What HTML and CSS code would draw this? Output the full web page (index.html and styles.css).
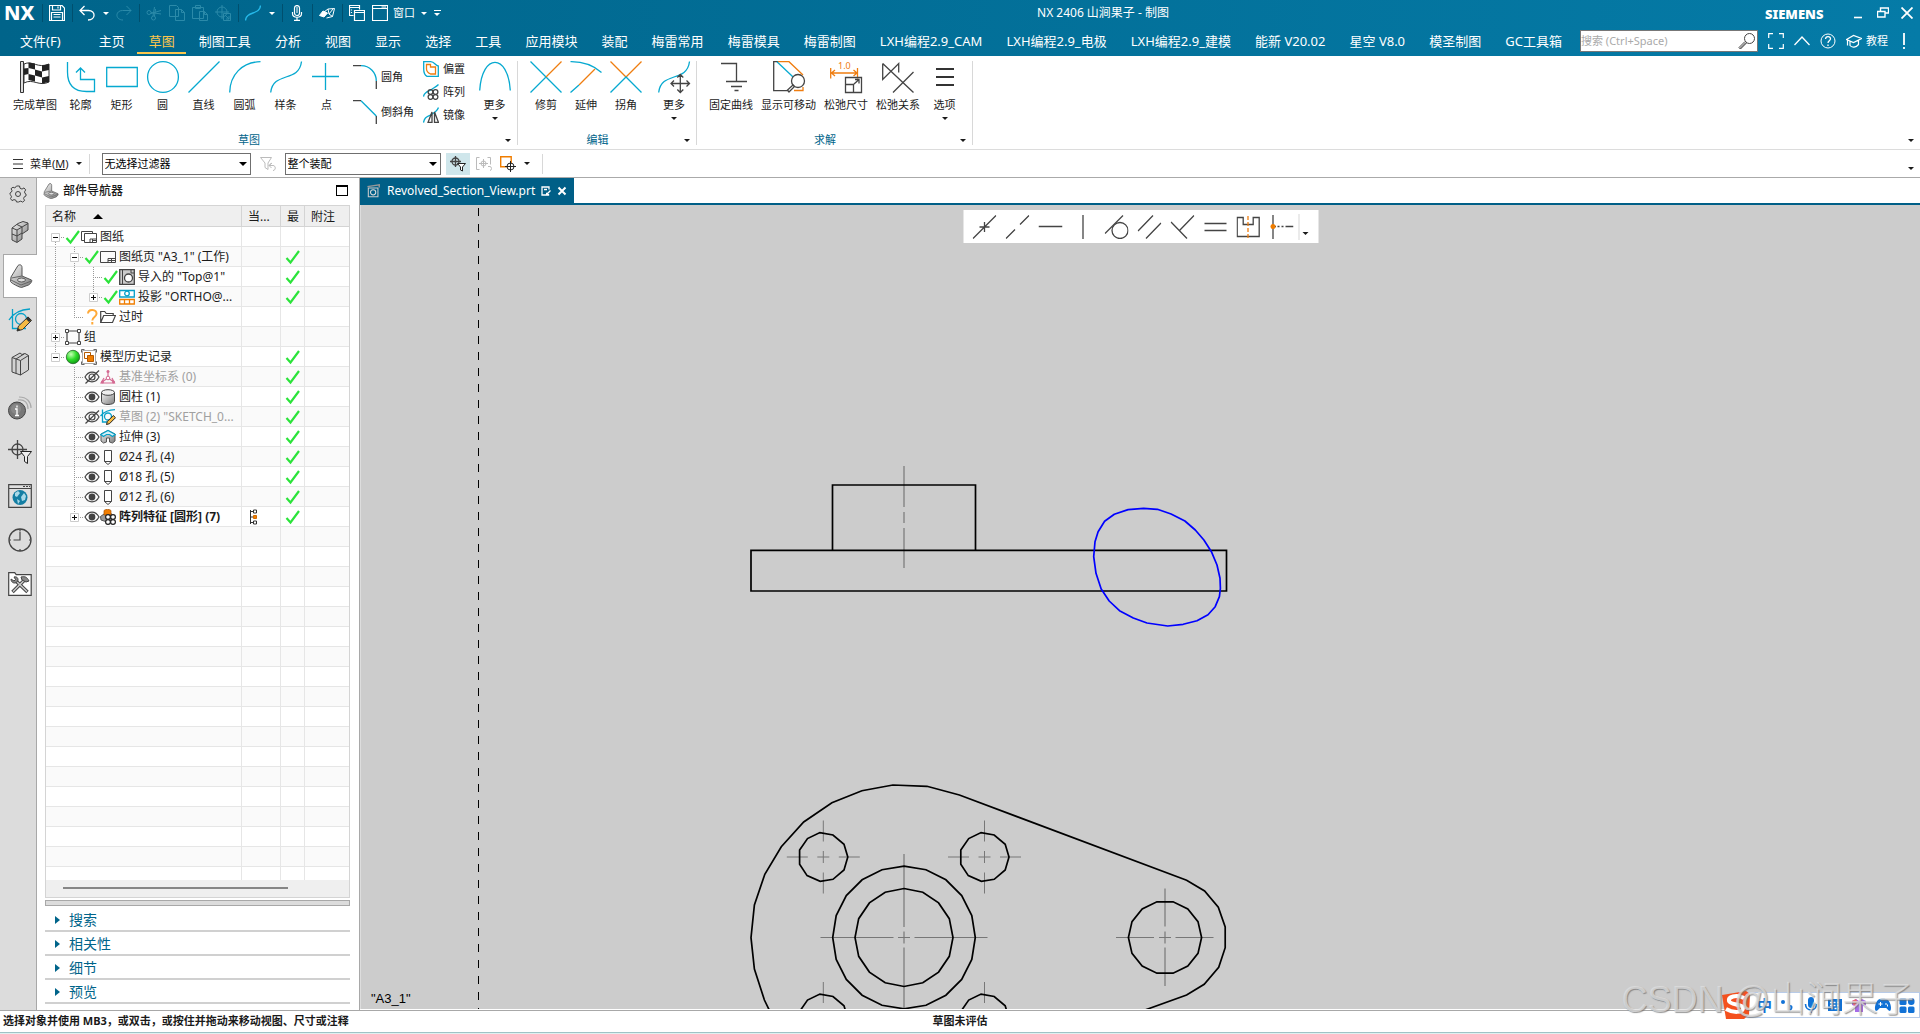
FILE: index.html
```
<!DOCTYPE html>
<html lang="zh-CN">
<head>
<meta charset="utf-8">
<title>NX 2406 山涧果子 - 制图</title>
<meta name="viewport" content="width=device-width, initial-scale=1">
<link rel="stylesheet" href="styles.css">
</head>
<body>
<svg class="defs" aria-hidden="true">
  <defs>
    <linearGradient id="steel" x1="0" y1="0" x2="1" y2="1"><stop offset="0" stop-color="#f4f4f4"/><stop offset="1" stop-color="#7d7d7d"/></linearGradient>
    <radialGradient id="ball" cx=".35" cy=".3" r=".8"><stop offset="0" stop-color="#c8ffb8"/><stop offset=".5" stop-color="#2edc2a"/><stop offset="1" stop-color="#0a8d10"/></radialGradient>
    <symbol id="check" viewBox="0 0 16 16"><path d="M1.500 9 5.500 13.500 14 2" fill="none" stroke="#2be33a" stroke-width="2.200"/></symbol>
    <symbol id="eye" viewBox="0 0 16 16"><path d="M1 8c3.500-6.500 10.500-6.500 14 0-3.500 6.500-10.500 6.500-14 0z" fill="#fff" stroke="#444" stroke-width="1.200"/><circle cx="8" cy="8" r="3.400" fill="#444"/></symbol>
    <symbol id="eye-off" viewBox="0 0 16 16"><path d="M1 8c3.500-6.500 10.500-6.500 14 0-3.500 6.500-10.500 6.500-14 0z" fill="none" stroke="#444" stroke-width="1.200"/><circle cx="8" cy="8" r="3" fill="none" stroke="#444" stroke-width="1.200"/><path d="M1.500 14.500 15 1.500" stroke="#444" stroke-width="1.200"/></symbol>
    <symbol id="hole" viewBox="0 0 16 16"><path d="M4.500 1.500h7v11l-3.500 3-3.500-3z M4.500 12.500h7" fill="#fff" stroke="#444"/></symbol>
    <symbol id="line-v" viewBox="0 0 19 20"><path d="M9.500 0v20" stroke="#999" stroke-dasharray="1 1"/></symbol>
    <symbol id="line-t" viewBox="0 0 19 20"><path d="M9.500 0v20M9 10.500h9" stroke="#999" stroke-dasharray="1 1"/></symbol>
    <symbol id="line-l" viewBox="0 0 19 20"><path d="M9.500 0v11M9 10.500h9" stroke="#999" stroke-dasharray="1 1"/></symbol>
    <symbol id="box" viewBox="0 0 19 20"><path d="M13 10.500h5" stroke="#999" stroke-dasharray="1 1"/><path d="M5.500 6.500h8v8h-8z" fill="#fff" stroke="#ccc"/><path d="M7 10.500h5" stroke="#111"/></symbol>
    <symbol id="minus-first" viewBox="0 0 19 20"><path d="M9.500 15v5" stroke="#999" stroke-dasharray="1 1"/><use href="#box"/></symbol>
    <symbol id="minus" viewBox="0 0 19 20"><path d="M9.500 0v20" stroke="#999" stroke-dasharray="1 1"/><use href="#box"/></symbol>
    <symbol id="minus-last" viewBox="0 0 19 20"><path d="M9.500 0v6" stroke="#999" stroke-dasharray="1 1"/><use href="#box"/></symbol>
    <symbol id="plus" viewBox="0 0 19 20"><path d="M9.500 0v20" stroke="#999" stroke-dasharray="1 1"/><use href="#box"/><path d="M9.500 8v5" stroke="#111"/></symbol>
    <symbol id="plus-last" viewBox="0 0 19 20"><path d="M9.500 0v6" stroke="#999" stroke-dasharray="1 1"/><use href="#box"/><path d="M9.500 8v5" stroke="#111"/></symbol>
    <symbol id="sketch" viewBox="0 0 24 24"><path d="M4.500 1v19.500H18M1 12C6 4 13 1.500 22 1" fill="none" stroke="#06a0c8" stroke-width="1.300"/><circle cx="13" cy="11" r="5.500" fill="none" stroke="#06a0c8" stroke-width="1.300"/><path d="m9 23 1.500-5L20 9l3.500 3.500-9 9z" fill="#f5b942" stroke="#333"/><path d="m9 23 1-3 2.500 2zM18 11l2-2.500 3.500 3.500-2.500 2z" fill="#333"/></symbol>
    <symbol id="bracket" viewBox="0 0 24 24"><path d="M2 13 9 1.500c2-1.500 4-.5 4 2V12l9.500 4c1 1-1 4-3 5l-7 2.500c-2 0-10.500-4.500-11-6z" fill="url(#steel)" stroke="#555"/><path d="M2.500 14 13 12M2 16l10 5 10.500-4" fill="none" stroke="#666"/><ellipse cx="12.500" cy="16" rx="4" ry="2" fill="#ddd" stroke="#555"/></symbol>
  </defs>
</svg>

<div class="app">
<header class="header">
  <div class="titlebar">
    <span class="nx">NX</span>
    <div class="quick">
      <i class="vsep"></i>
      <button class="qb" aria-label="保存"><svg viewBox="0 0 16 16"><path d="M.5.500h12.500l2.500 2.500v12.500H.5zM3.500.500v4.500h8V.5M9 1.500v2M2.500 15.500v-8h11v8M4.500 9.500h7M4.500 12h7" stroke-width="1.200"/></svg></button>
      <i class="vsep"></i>
      <button class="qb" aria-label="撤消"><svg viewBox="0 0 16 16"><path d="M5.500 1 1 5.500 5.500 10M1 5.500h8.500c7.500 0 7.500 9.500-.5 9.500" stroke-width="1.300"/></svg></button>
      <button class="drop" aria-label="撤消列表"><i class="caret"></i></button>
      <button class="qb off" aria-label="重做"><svg viewBox="0 0 16 16"><path d="M10.500 1 15 5.500 10.500 10M15 5.500H6.500C-1 5.500-1 15 7 15"/></svg></button>
      <i class="vsep"></i>
      <button class="qb off" aria-label="剪切"><svg viewBox="0 0 16 16"><circle cx="3" cy="7.500" r="2"/><circle cx="7.500" cy="13" r="2"/><path d="M5 7.500 15 9M7 11 8.500 2M5 8.500l10-3M8.500 11l1-7"/></svg></button>
      <button class="qb off" aria-label="复制"><svg viewBox="0 0 16 16"><path d="M.5.500h7l2 2v9h-9zM6.500 4.500h6l3 3v8h-9zM12.500 4.500v3h3"/></svg></button>
      <button class="qb off" aria-label="粘贴"><svg viewBox="0 0 16 16"><path d="M.5 2.500h11v11H.5zM3.500.500h5v3h-5zM7.500 6.500h5l3 3v6h-8zM12.500 6.500v3h3"/></svg></button>
      <button class="qb off" aria-label="移动"><svg viewBox="0 0 16 16"><circle cx="7" cy="7" r="5"/><path d="M7 0v14M0 7h14M8.500 8.500h7v7h-7zM10 10l4 4M14 11v3h-3"/></svg></button>
      <i class="vsep"></i>
      <button class="qb" aria-label="样条"><svg viewBox="0 0 16 16"><path d="M.5 15.500C1 6 15 10 15.500.500" stroke="#25b8e8" stroke-width="1.400"/></svg></button>
      <button class="drop" aria-label="样条列表"><i class="caret"></i></button>
      <i class="vsep"></i>
      <button class="qb" aria-label="语音"><svg viewBox="0 0 16 16"><path d="M5.500 3c0-3.300 5-3.300 5 0v5c0 3.300-5 3.300-5 0zM7 3h2M7 5h2M7 7h2M3.500 7v1.500c0 5 9 5 9 0V7M8 12.500V15M5 15.400h6" stroke-width="1.200"/></svg></button>
      <i class="vsep"></i>
      <button class="qb" aria-label="触控"><svg viewBox="0 0 16 16"><path d="M.5 10.500 4 6l4.500 2L5 12z" fill="#fff"/><path d="M5 7 9 4l6.500-.5-2 8-6 1.500M9 4l1 5 3.500 2.500M10 9l4-5"/></svg></button>
      <i class="vsep"></i>
      <button class="qb" aria-label="层叠窗口"><svg viewBox="0 0 16 16"><path d="M4.500 10.500h-4V.500h10v4M.5 2.500h10M5.500 5.500h10v10h-10zM5.500 7.500h10M2.500 4.500v1M2.500 7v1" stroke-width="1.200"/></svg></button>
      <button class="qwin"><svg viewBox="0 0 16 16"><path d="M.5.500h15v15H.5zM.5 3.500h15M9.500 2h4.500" stroke-width="1.200"/></svg><span>窗口</span><i class="caret"></i></button>
      <button class="drop overflow" aria-label="更多命令"><i class="caret"></i></button>
    </div>
    <h1 class="apptitle">NX 2406 山涧果子 - 制图</h1>
    <span class="siemens">SIEMENS</span>
    <div class="winctl">
      <button aria-label="最小化"><svg viewBox="0 0 12 12"><path d="M1 10.500h8" stroke-width="1.600"/></svg></button>
      <button aria-label="还原"><svg viewBox="0 0 12 12"><path d="M3.500 4V1h8v5h-3M.5 4.500h7.500v5.500H.5z" stroke-width="1.400"/></svg></button>
      <button aria-label="关闭"><svg viewBox="0 0 12 12"><path d="m.5.500 11 11m0-11-11 11" stroke-width="1.800"/></svg></button>
    </div>
  </div>
  <div class="menubar">
    <nav class="tabs">
      <a href="#" class="file">文件(F)</a><a href="#">主页</a><a href="#" class="active">草图</a><a href="#">制图工具</a><a href="#">分析</a><a href="#">视图</a><a href="#">显示</a><a href="#">选择</a><a href="#">工具</a><a href="#">应用模块</a><a href="#">装配</a><a href="#">梅雷常用</a><a href="#">梅雷模具</a><a href="#">梅雷制图</a><a href="#">LXH编程2.9_CAM</a><a href="#">LXH编程2.9_电极</a><a href="#">LXH编程2.9_建模</a><a href="#">能新 V20.02</a><a href="#">星空 V8.0</a><a href="#">模圣制图</a><a href="#">GC工具箱</a>
    </nav>
    <div class="search">
      <input type="text" placeholder="搜索 (Ctrl+Space)" aria-label="搜索">
      <svg viewBox="0 0 18 18"><circle cx="11.500" cy="6.500" r="5"/><path d="M8 10.500 2 16.500M7 9.500l-6 6 1.500 1.500 6-6"/></svg>
    </div>
    <div class="menutools">
      <button aria-label="全屏"><svg viewBox="0 0 16 16"><path d="M5 .7H.7V5M11 .7h4.300V5M5 15.300H.7V11M11 15.300h4.300V11" stroke-width="1.200"/></svg></button>
      <button aria-label="折叠功能区"><svg viewBox="0 0 16 16"><path d="m.5 12 7.500-8 7.500 8" stroke-width="1.300"/></svg></button>
      <button aria-label="帮助"><svg viewBox="0 0 16 16"><circle cx="8" cy="8" r="7"/><path d="M5.500 6c.3-3.500 5.200-3 5 0-.2 1.800-2.500 1.800-2.500 4M8 11.500V13" stroke-width="1.300"/></svg></button>
      <button class="tutor"><svg viewBox="0 0 16 16"><path d="m.5 6.500 7-4 8 3-8 4zM4 8.500v4c2 2.500 6 2 8.500-1V7.500M1.500 7.500v5" stroke-width="1.200"/></svg><span>教程</span></button>
      <button class="bang" aria-label="通知"><svg viewBox="0 0 4 16"><path d="M2 0v12M2 14v2" stroke-width="1.800"/></svg></button>
    </div>
  </div>
</header>

<section class="ribbon" aria-label="草图">
  <div class="group g-sketch">
    <div class="tools">
      <button class="big wide"><svg viewBox="0 0 32 32"><path d="M1.500.500h3v31h-3z" fill="#ddd" stroke="#333"/><path d="M5 3c8-4 14 5 25 0v18c-10 5-16-4-25 1z" fill="#fff" stroke="#333"/><path d="M9.500 1.500 16 2.500v6l-6.500-1.500zM23 4.500l7-1.500v6l-7 1.500zM5 7.500 9.500 7v6L5 14zM16 8.500l7 2v6l-7-2zM9.500 13l6.500 1.500v6l-6.500-1.500zM23 16.500 30 15v6l-7 1.500z" fill="#222"/></svg><span>完成草图</span></button>
      <button class="big"><svg viewBox="0 0 32 32" class="c"><path d="M2.500 1v10c0 12 6 19.500 19 19.500h8v-12h-14V7M11 11.500 15.500 7 20 11.500"/></svg><span>轮廓</span></button>
      <button class="big"><svg viewBox="0 0 32 32" class="c"><path d="M.7 6.500h30.600v19H.7z"/></svg><span>矩形</span></button>
      <button class="big"><svg viewBox="0 0 32 32" class="c"><circle cx="16" cy="16" r="15.400"/></svg><span>圆</span></button>
      <button class="big"><svg viewBox="0 0 32 32" class="c"><path d="M.5 31.500 31.500.500"/></svg><span>直线</span></button>
      <button class="big"><svg viewBox="0 0 32 32" class="c"><path d="M.7 31.500C1 14 13 1 31.500.700"/></svg><span>圆弧</span></button>
      <button class="big"><svg viewBox="0 0 32 32" class="c"><path d="M.7 31.500C3 10 29 22 31.500.500"/></svg><span>样条</span></button>
      <button class="big"><svg viewBox="0 0 32 32" class="c"><path d="M14.500 2v27M1 15.500h27"/></svg><span>点</span></button>
      <div class="pair">
        <button><svg viewBox="0 0 24 24"><path d="M0 .7h8M23.300 16v8" class="k"/><path d="M8 .7c9 0 15.300 7 15.300 15.300" class="cy"/></svg><span>圆角</span></button>
        <button><svg viewBox="0 0 24 24"><path d="M0 .7h8M23.300 16v8" class="k"/><path d="m8 .7 15.300 15.300" class="cy"/></svg><span>倒斜角</span></button>
      </div>
      <div class="triple">
        <button><svg viewBox="0 0 16 16"><path d="M.7.700h7c4 0 4.500 4 7.600 4.300v10.300H4C1.500 14 .7 10 .7 8z" class="cy"/><path d="M3.500 3.500h4v2.500h5v7h-5c-2-1-4-3-4-5z" class="or"/></svg><span>偏置</span></button>
        <button><svg viewBox="0 0 16 16"><path d="M.5 12.500c1-5 5-5 8-7 3-2 5-3 7-5" class="cy"/><circle cx="7.500" cy="8" r="2.400" class="k"/><circle cx="12.500" cy="8" r="2.400" class="k"/><circle cx="7.500" cy="13" r="2.400" class="k"/><circle cx="12.500" cy="13" r="2.400" class="k"/></svg><span>阵列</span></button>
        <button><svg viewBox="0 0 16 16"><path d="M.5 15.500c1-5 3-5.500 6-7 4-2 8-4 9-8" class="cy"/><path d="m9 5-4 10.500h4zM11.500 5l4 10.500h-4z" class="k"/></svg><span>镜像</span></button>
      </div>
      <button class="big"><svg viewBox="0 0 32 32" class="c"><path d="M.7 29.500C3-8 29-8 31.300 29.500"/></svg><span>更多</span><i class="caret"></i></button>
    </div>
    <div class="foot"><span>草图</span><button aria-label="草图选项"><i class="caret"></i></button></div>
  </div>
  <div class="group g-edit">
    <div class="tools">
      <button class="big"><svg viewBox="0 0 32 32"><path d="m.5.500 31 31M.5 31.500 16 16" class="cy"/><path d="M16 16 31.500.500" class="or"/></svg><span>修剪</span></button>
      <button class="big"><svg viewBox="0 0 32 32"><path d="M.5.700C13 .5 23 4 31.500 11.500M.5 31.500 9 24" class="cy"/><path d="M9 24 25 8" class="or"/></svg><span>延伸</span></button>
      <button class="big"><svg viewBox="0 0 32 32"><path d="M.5.500 16 16 31.500.500" class="or"/><path d="M.5 31.500 16 16l15.500 15.500" class="cy"/></svg><span>拐角</span></button>
      <button class="big gapped"><svg viewBox="0 0 32 32"><path d="M.7 31.500C3 10 29 22 31.500.500" class="cy"/><path d="M13 22.500h18.500M22.300 13.500v18M16 19.500l-3 3 3 3M28.500 19.500l3 3-3 3M19.300 16.500l3-3 3 3M19.300 28.500l3 3 3-3" class="k"/></svg><span>更多</span><i class="caret"></i></button>
    </div>
    <div class="foot"><span>编辑</span><button aria-label="编辑选项"><i class="caret"></i></button></div>
  </div>
  <div class="group g-solve">
    <div class="tools">
      <button class="big fit"><svg viewBox="0 0 32 32"><path d="M6 2.500h15.500v18M11 20.500h21M16 25.500h11M19.500 29.500h4" class="k"/></svg><span>固定曲线</span></button>
      <button class="big fit"><svg viewBox="0 0 32 32"><path d="M5 .7H.7v29H15" class="k"/><path d="m4 .7 20 19" class="cy"/><path d="M5 .7h11L30 14M21 29.500h9V26" class="or"/><circle cx="25" cy="20" r="6.500" class="k lens"/><path d="m20 24-5.500 5 1.500 2 5.500-5.500z" class="k"/></svg><span>显示可移动</span></button>
      <button class="big fit"><svg viewBox="0 0 32 32"><text x="8" y="8" class="dim">1.0</text><path d="M.7 7v10.500M27.500 7v10.500M1.500 12h25M5 9l-3.500 3L5 15M23.500 9l3.500 3-3.500 3" class="or"/><path d="M15.500 16.500h16v15h-16zM15.500 23.500h8v8M24 23l5-4.500M25 18.500h4v4" class="k"/></svg><span>松弛尺寸</span></button>
      <button class="big fit"><svg viewBox="0 0 32 32"><path d="M.7 2.500v16l16-16v9M.7 2.500 31.500 31.500M31.500 11 11 31.500" class="k"/></svg><span>松弛关系</span></button>
      <button class="big"><svg viewBox="0 0 32 32"><path d="M7 8h18M7 16h18M7 24h18" stroke="#333" stroke-width="2"/></svg><span>选项</span><i class="caret"></i></button>
    </div>
    <div class="foot"><span>求解</span><button aria-label="求解选项"><i class="caret"></i></button></div>
  </div>
  <button class="more" aria-label="功能区选项"><i class="caret"></i></button>
</section>

<div class="selbar">
  <button class="menu"><svg viewBox="0 0 10 10"><path d="M0 .5h10M0 5h10M0 9.500h10" stroke="#333"/></svg><span>菜单(<u>M</u>)</span><i class="caret"></i></button>
  <i class="bsep"></i>
  <span class="combo c1"><select aria-label="类型过滤器"><option>无选择过滤器</option></select></span>
  <button class="sb" aria-label="重置过滤器"><svg viewBox="0 0 16 16"><path d="M.5 1.500h11L8 7v6.500l-3-2V7zM9.500 9 12 7M9 9.500h4c3 0 3 5 0 5M11.500 7 9 9.500l2.500 2.500" fill="none" stroke="#bbb"/></svg></button>
  <span class="combo c2"><select aria-label="选择范围"><option>整个装配</option></select></span>
  <button class="sb on" aria-label="选择过滤"><svg viewBox="0 0 16 16"><circle cx="5.500" cy="5.500" r="3.500" class="k"/><path d="M5.500 0v11M0 5.500h11" class="k"/><path d="M7.500 7.500h8l-3 3.500v4l-2-1v-3z" fill="#fff" stroke="#222"/></svg></button>
  <button class="sb" aria-label="选择组"><svg viewBox="0 0 16 16"><path d="M3.500 1.500h-3v12h3M11.500 1.500h3v7M3 7.500h9M7.500 3v9M12 10.500h2c2 0 2 4 0 4" fill="none" stroke="#bbb"/><circle cx="7.500" cy="7.500" r="2.500" fill="none" stroke="#bbb"/></svg></button>
  <button class="sb" aria-label="选择区域"><svg viewBox="0 0 16 16"><path d="M.7.700h10.500v10H.7z" fill="#fff" stroke="#f07d00" stroke-width="1.400"/><circle cx="10.500" cy="10.500" r="3.500" fill="#fff" stroke="#222"/><path d="M10.500 5v11M5 10.500h11" stroke="#222"/></svg></button>
  <button class="drop" aria-label="选择区域列表"><i class="caret"></i></button>
  <i class="bsep"></i>
  <button class="more" aria-label="工具条选项"><i class="caret"></i></button>
</div>

<main class="work">
  <nav class="rail" aria-label="资源条">
    <button class="gear" aria-label="设置"><svg viewBox="0 0 18 18"><path d="M7.500 1h3l.5 2.200 2 .9 2-1.200 1.700 2-1.200 2 .5 1.600 1 .5v2l-1.700.8-.7 1.700 1 2-2 1.600-1.800-1-1.800.7L9.500 17h-2L7 15.300l-2-.7-2 1-1.500-2 1-1.800-.6-1.500L1 9.500V8l1.500-1L3 5.500 2 3.700 4 2.200 5.800 3z" fill="none" stroke="#444"/><circle cx="9" cy="9" r="2.500" fill="none" stroke="#444"/></svg></button>
    <button aria-label="装配导航器"><svg viewBox="0 0 24 24"><path d="m4 8 6-4.500 5-2 5 1.500v7l-6 4v5L9 22.500 4 20z" fill="url(#steel)" stroke="#444"/><path d="m4 8 5 2v12M9 10l11-6.500M4 14l5 2 5-3M14 14V7l-5-2.500" fill="none" stroke="#444"/></svg></button>
    <button class="current" aria-label="部件导航器"><svg viewBox="0 0 24 24"><use href="#bracket"/></svg></button>
    <button aria-label="草图导航器"><svg viewBox="0 0 24 24"><use href="#sketch"/></svg></button>
    <button aria-label="重用库"><svg viewBox="0 0 24 24"><path d="M4 5.500 12 1l2 1.500L17 1.500l3.500 2V18l-8 5-8.500-3z" fill="#d2d2d2" stroke="#444"/><path d="m4 5.500 8.500 3 8-5M12.500 8.500V23M8 7v14.500M8 7l8-5" fill="none" stroke="#444"/></svg></button>
    <button aria-label="信息"><svg viewBox="0 0 24 24"><path d="M10 4c7-1 10 3 10 9M11 1c8 0 12 5 12 11" fill="none" stroke="#aaa" stroke-width="1.200"/><circle cx="9" cy="14.500" r="8.500" fill="#777" stroke="#444"/><circle cx="8" cy="13" r="5" fill="#999" opacity=".5"/><path d="M9 9.500v2M7 13h2v6M7 19.500h4" fill="none" stroke="#fff" stroke-width="1.300"/></svg></button>
    <button aria-label="选择"><svg viewBox="0 0 24 24"><circle cx="9.500" cy="9.500" r="5.500" class="k"/><path d="M9.500 0v19M0 9.500h19" class="k"/><path d="M12.500 11.500h11l-4 5v7l-3-2v-5z" fill="#eee" stroke="#222"/></svg></button>
    <button aria-label="浏览器"><svg viewBox="0 0 24 24"><path d="M.7.700h22.600v22.600H.7zM.7 4.500h22.600M15 2.500h2M18 2.500h2M21 2.500h1" fill="#e0e0e0" stroke="#444" stroke-width="1.200"/><circle cx="12" cy="13.500" r="7.500" fill="#147ea3"/><path d="m7 9 3-2 2 2-3 4-2-1zM13 13l3-4 2 3-1 4-3 1zM9 15l3 2-2 3z" fill="#a9d9e8"/></svg></button>
    <button aria-label="历史"><svg viewBox="0 0 24 24"><circle cx="12" cy="12" r="11" fill="none" stroke="#444" stroke-width="1.300"/><path d="M12 3.500v8.500H5.500M12 1v2M12 21v2M1 12h2M21 12h2" fill="none" stroke="#444" stroke-width="1.200"/></svg></button>
    <button aria-label="加工工具"><svg viewBox="0 0 24 24"><path d="M.7 3V.7h6l1.500 2h15v20.600H.7z" fill="#fff" stroke="#444" stroke-width="1.200"/><path d="m4.500 20 12-12M19.500 20 8 9" stroke="#444" stroke-width="3.500"/><path d="m5 19.500 12-12M19 19.500 8 9" stroke="#ccc" stroke-width="1.500"/><path d="M3 7c0 4 4 5 6 3s1-6-3-5l1.500 2.500L6 9zM13 5c4-1 6 0 8 4l-3 1-4-2z" fill="#888" stroke="#444"/></svg></button>
  </nav>

  <aside class="panel">
    <div class="phead"><svg viewBox="0 0 24 24"><use href="#bracket"/></svg><h2>部件导航器</h2><button aria-label="最大化"></button></div>
    <div class="treebox">
      <div class="treescroll">
      <table class="tree">
        <colgroup><col><col class="w39"><col class="w24"><col class="w45"></colgroup>
        <thead><tr><th>名称<i class="sort"></i></th><th>当...</th><th>最</th><th>附注</th></tr></thead>
        <tbody>
          <tr><td><div class="node"><svg class="slot"><use href="#minus-first"/></svg><svg class="ic"><use href="#check"/></svg><svg class="ic" viewBox="0 0 16 16"><path d="M3 11.500H.5v-9h11V4M3.500 4.500h12v9h-12zM9 13v-3h6M11.500 10v3M11.500 11.500H15" fill="none" stroke="#444"/></svg><span>图纸</span></div></td><td></td><td></td><td></td></tr>
          <tr><td><div class="node"><svg class="slot"><use href="#line-v"/></svg><svg class="slot"><use href="#minus"/></svg><svg class="ic"><use href="#check"/></svg><svg class="ic" viewBox="0 0 16 16"><path d="M.5 2.500h15v11H.5zM8 13V9.500h7M11.500 9.500V13M8 11.500h7" fill="none" stroke="#444"/></svg><span>图纸页 "A3_1" (工作)</span></div></td><td></td><td><svg class="ic"><use href="#check"/></svg></td><td></td></tr>
          <tr><td><div class="node"><svg class="slot"><use href="#line-v"/></svg><svg class="slot"><use href="#line-v"/></svg><svg class="slot"><use href="#line-t"/></svg><svg class="ic"><use href="#check"/></svg><svg class="ic" viewBox="0 0 16 16"><path d="M.7.700h14.600v14.600H.7z" fill="#ccc" stroke="#444" stroke-width="1.300"/><path d="M3.500 1v14M12 1v3h3" fill="none" stroke="#444"/><circle cx="9.500" cy="9" r="4" fill="#fff" stroke="#444" stroke-width="1.300"/></svg><span>导入的 "Top@1"</span></div></td><td></td><td><svg class="ic"><use href="#check"/></svg></td><td></td></tr>
          <tr><td><div class="node"><svg class="slot"><use href="#line-v"/></svg><svg class="slot"><use href="#line-v"/></svg><svg class="slot"><use href="#plus-last"/></svg><svg class="ic"><use href="#check"/></svg><svg class="ic" viewBox="0 0 16 16"><path d="M.7 1.500h14.600V8H.7z" fill="#fff" stroke="#06a0c8" stroke-width="1.300"/><circle cx="8" cy="4.500" r="2.300" fill="none" stroke="#06a0c8" stroke-width="1.300"/><path d="M.7 10.500h14.600v4.500H.7zM5.500 10.500V15M10.500 10.500V15" fill="#fff" stroke="#f07d00" stroke-width="1.300"/></svg><span>投影 "ORTHO@...</span></div></td><td></td><td><svg class="ic"><use href="#check"/></svg></td><td></td></tr>
          <tr><td><div class="node"><svg class="slot"><use href="#line-v"/></svg><svg class="slot"><use href="#line-l"/></svg><svg class="ic" viewBox="0 0 16 16"><path d="M4 4.500c.5-5 9-4.500 8.500.5-.3 3-4.200 3-4.200 6.500M8.300 13v2.500" fill="none" stroke="#ffa938" stroke-width="2"/></svg><svg class="ic" viewBox="0 0 16 16"><path d="M.7 13.500V2.500h4l1.500 2h7v2M.7 13.500l3-7h11.800l-3 7z" fill="none" stroke="#444" stroke-width="1.200"/></svg><span>过时</span></div></td><td></td><td></td><td></td></tr>
          <tr><td><div class="node"><svg class="slot"><use href="#plus"/></svg><svg class="ic" viewBox="0 0 16 16"><path d="M2 2h12v12H2z" fill="none" stroke="#444" stroke-width="1.200"/><path d="M.5.500h3v3h-3zM12.500.500h3v3h-3zM.5 12.500h3v3h-3zM12.500 12.500h3v3h-3z" fill="#fff" stroke="#444"/></svg><span>组</span></div></td><td></td><td></td><td></td></tr>
          <tr><td><div class="node"><svg class="slot"><use href="#minus-last"/></svg><svg class="ic" viewBox="0 0 16 16"><circle cx="8" cy="8" r="6.700" fill="url(#ball)" stroke="#26642a" stroke-width=".8"/></svg><svg class="ic" viewBox="0 0 16 16"><path d="M1.500 1.500h13v13h-13z" fill="none" stroke="#aaa"/><path d="M.5 3.500v-3h3M12.500.500h3v3M.5 12.500v3h3M12.500 15.500h3v-3" fill="none" stroke="#666"/><path d="M3.500 3.500h6v6h-6z" fill="#fff" stroke="#b45a00"/><path d="M6.500 6.500h6v6h-6z" fill="#f07d00" stroke="#b45a00"/></svg><span>模型历史记录</span></div></td><td></td><td><svg class="ic"><use href="#check"/></svg></td><td></td></tr>
          <tr class="dim-row"><td><div class="node"><i class="slot"></i><svg class="slot"><use href="#line-t"/></svg><svg class="ic"><use href="#eye-off"/></svg><svg class="ic" viewBox="0 0 16 16"><path d="M8 1.500V9L2 13M8 9l6 4M4 9l-3 5h13.500L12 9" fill="none" stroke="#d46a92" stroke-width="1.200"/><circle cx="8" cy="2.500" r="1.500" fill="#d46a92"/><circle cx="2.500" cy="13" r="1.500" fill="#d46a92"/><circle cx="13.500" cy="13" r="1.500" fill="#d46a92"/><circle cx="8" cy="9" r="1.800" fill="#fff" stroke="#d46a92"/></svg><span>基准坐标系 (0)</span></div></td><td></td><td><svg class="ic"><use href="#check"/></svg></td><td></td></tr>
          <tr><td><div class="node"><i class="slot"></i><svg class="slot"><use href="#line-t"/></svg><svg class="ic"><use href="#eye"/></svg><svg class="ic" viewBox="0 0 16 16"><path d="M1.500 3.500v9c0 4 13 4 13 0v-9" fill="url(#steel)" stroke="#444"/><ellipse cx="8" cy="3.500" rx="6.500" ry="2.800" fill="#eee" stroke="#444"/></svg><span>圆柱 (1)</span></div></td><td></td><td><svg class="ic"><use href="#check"/></svg></td><td></td></tr>
          <tr class="dim-row"><td><div class="node"><i class="slot"></i><svg class="slot"><use href="#line-t"/></svg><svg class="ic"><use href="#eye-off"/></svg><svg class="ic" viewBox="0 0 16 16"><path d="M2.500.500v12.500H8M.5 7C4 3 8 .8 15 .7" fill="none" stroke="#06a0c8" stroke-width="1.300"/><circle cx="8" cy="7.500" r="3.500" fill="none" stroke="#06a0c8" stroke-width="1.300"/><path d="m6.500 15.500.8-3 6-6 2.200 2.200-6 6z" fill="#f5b942" stroke="#222"/></svg><span>草图 (2) "SKETCH_0...</span></div></td><td></td><td><svg class="ic"><use href="#check"/></svg></td><td></td></tr>
          <tr><td><div class="node"><i class="slot"></i><svg class="slot"><use href="#line-t"/></svg><svg class="ic"><use href="#eye"/></svg><svg class="ic" viewBox="0 0 16 16"><path d="M1 5 8 1.500 15 5v7l-2.500 2-3-1V9h-3v4l-3 1L1 12z" fill="url(#steel)" stroke="#555"/><path d="m.7 5.500 7.300-4 7.300 4L12.500 7.500 9.500 5.500h-3l-3 2z" fill="#d5f1f8" stroke="#06a0c8" stroke-width="1.200"/></svg><span>拉伸 (3)</span></div></td><td></td><td><svg class="ic"><use href="#check"/></svg></td><td></td></tr>
          <tr><td><div class="node"><i class="slot"></i><svg class="slot"><use href="#line-t"/></svg><svg class="ic"><use href="#eye"/></svg><svg class="ic"><use href="#hole"/></svg><span>Ø24 孔 (4)</span></div></td><td></td><td><svg class="ic"><use href="#check"/></svg></td><td></td></tr>
          <tr><td><div class="node"><i class="slot"></i><svg class="slot"><use href="#line-t"/></svg><svg class="ic"><use href="#eye"/></svg><svg class="ic"><use href="#hole"/></svg><span>Ø18 孔 (5)</span></div></td><td></td><td><svg class="ic"><use href="#check"/></svg></td><td></td></tr>
          <tr><td><div class="node"><i class="slot"></i><svg class="slot"><use href="#line-t"/></svg><svg class="ic"><use href="#eye"/></svg><svg class="ic"><use href="#hole"/></svg><span>Ø12 孔 (6)</span></div></td><td></td><td><svg class="ic"><use href="#check"/></svg></td><td></td></tr>
          <tr class="bold-row"><td><div class="node"><i class="slot"></i><svg class="slot"><use href="#plus-last"/></svg><svg class="ic"><use href="#eye"/></svg><svg class="ic" viewBox="0 0 16 16"><path d="M.5 7.500 4 5h8v6l-5 2-6-2z" fill="#999" stroke="#555"/><path d="M4 1.500C5 0 10 0 11 1.500V6H4z" fill="#f07d00" stroke="#a85200" stroke-width=".7"/><g fill="#fff" stroke="#222" stroke-width="1.200"><circle cx="8" cy="8" r="2.400"/><circle cx="13" cy="8" r="2.400"/><circle cx="8" cy="13" r="2.400"/><circle cx="13" cy="13" r="2.400"/></g></svg><span>阵列特征 [圆形] (7)</span></div></td><td class="left"><svg class="ic" viewBox="0 0 16 16"><path d="M2.500 1v14M2.500 2.500h3M2.500 13.500h3M2.500 8h3M5.500 1h3v3h-3zM5.500 12h3v3h-3z" fill="none" stroke="#333"/><path d="M5.500 6.500h3v3h-3z" fill="#f07d00" stroke="#d06a00"/></svg></td><td><svg class="ic"><use href="#check"/></svg></td><td></td></tr>
          <tr><td></td><td></td><td></td><td></td></tr><tr><td></td><td></td><td></td><td></td></tr><tr><td></td><td></td><td></td><td></td></tr>
          <tr><td></td><td></td><td></td><td></td></tr><tr><td></td><td></td><td></td><td></td></tr><tr><td></td><td></td><td></td><td></td></tr>
          <tr><td></td><td></td><td></td><td></td></tr><tr><td></td><td></td><td></td><td></td></tr><tr><td></td><td></td><td></td><td></td></tr>
          <tr><td></td><td></td><td></td><td></td></tr><tr><td></td><td></td><td></td><td></td></tr><tr><td></td><td></td><td></td><td></td></tr>
          <tr><td></td><td></td><td></td><td></td></tr><tr><td></td><td></td><td></td><td></td></tr><tr><td></td><td></td><td></td><td></td></tr>
          <tr><td></td><td></td><td></td><td></td></tr><tr><td></td><td></td><td></td><td></td></tr><tr><td></td><td></td><td></td><td></td></tr>
        </tbody>
      </table>
      </div>
      <div class="hscroll"><i></i></div>
    </div>
    <div class="splitter"></div>
    <div class="folds">
      <button>搜索</button>
      <button>相关性</button>
      <button>细节</button>
      <button>预览</button>
    </div>
  </aside>

  <section class="doc">
    <div class="doctabs">
      <div class="doctab">
        <svg viewBox="0 0 16 16"><path d="M1.500 4.500h11v10h-11z" fill="none" stroke="#ccc" stroke-width="1.200"/><path d="M.5 3 14 1v3" fill="none" stroke="#999" stroke-width="1.600"/><circle cx="7" cy="9.500" r="3" fill="none" stroke="#ddd" stroke-width="1.200"/></svg>
        <span>Revolved_Section_View.prt</span>
        <svg class="sm" viewBox="0 0 10 10"><path d="M8 3.500V1H1v8h6.500V8M3 3.500h3M9.500 4.500l-3 3H5" fill="none" stroke="#fff" stroke-width="1.300"/></svg>
        <button aria-label="关闭选项卡"><svg viewBox="0 0 10 10"><path d="m1.500 1.500 7 7m0-7-7 7" stroke="#fff" stroke-width="2"/></svg></button>
      </div>
    </div>
    <div class="canvas">
      <svg class="drawing">
        <defs>
          <g id="bolt"><path class="ctr" d="M-36.500 0h21M-6 0H6M15.500 0h21M0-36.500v21M0-6V6M0 15.500v21"/><path class="edge" d="M24.500 0 20.700-12.700 9.700-22-3.400-24.400-15.800-18.400-23.700-7V7.300L-16.200 18.600-3.100 24.300 9.700 22.300 20.700 13z"/></g>
        </defs>
        <path class="sheet" d="M118.500 3V1200"/>
        <g transform="translate(-360 -205)">
          <path class="ctr2" d="M904 466v41M904 512v11M904 528v40"/>
          <path class="edge" d="M832.500 550V485h143v65M751 550.300h475.500V591H751z"/>
          <path class="blue" d="M1143.600 508.300 1157.400 509.300 1171.100 514 1184.900 521 1195.300 530 1203.900 540 1211.400 551.700 1217 565 1220 578.300 1220.400 588.300 1219.400 596.700 1215.200 606.700 1208 614.700 1197 620.700 1183.200 624.300 1167.700 626 1147 623 1133.300 618 1119.500 610.700 1109.200 601 1101.200 589 1096 573.300 1093.700 556.700 1095 541.700 1098.100 531.700 1104.600 521.300 1114.300 514.300 1128.100 509.600z"/>
          <path class="edge" d="M781 1030 768.900 1009.300 764.400 1000 754.400 969 751 937.700 754.400 905 764.800 874.300 781.300 846.700 803.700 822 831.900 802.700 861.900 790.700 892.900 785 927 786.300 959.400 795 1186.600 880.300 1204.600 891 1218.300 907.300 1225.200 927V947.700L1218.700 967.300 1204.200 984.300 1186.600 995 1147.700 1009 1100 1027"/>
          <use href="#bolt" x="823.300" y="857"/>
          <use href="#bolt" x="984.500" y="857"/>
          <use href="#bolt" x="823.300" y="1018.500"/>
          <use href="#bolt" x="984.500" y="1018.500"/>
          <g transform="translate(904 937.500)">
            <path class="ctr2" d="M0-83.500v73M0-6V6M0 10v80"/>
            <path class="ctr" d="M-83.500 0h73M-6 0H6M10.500 0h73"/>
            <path class="edge" d="M0-71.300 22-67.800 41.900-57.700 57.700-41.900 67.800-22 71.300 0 67.800 22 57.700 41.900 41.900 57.700 22 67.800 0 71.300-22 67.800-41.900 57.700-57.700 41.900-67.800 22-71.300 0-67.800-22-57.700-41.900-41.900-57.700-22-67.800z"/>
            <path class="edge" d="M0-49 18.800-45.300 34.600-34.600 45.300-18.800 49 0 45.300 18.800 34.600 34.600 18.800 45.300 0 49-18.800 45.300-34.600 34.600-45.300 18.800-49 0-45.300-18.800-34.600-34.600-18.800-45.300z"/>
          </g>
          <g transform="translate(1165 937.500)">
            <path class="ctr2" d="M0-49v38M0-6V6M0 10v38.500"/>
            <path class="ctr" d="M-49 0h38M-6 0H6M10.500 0h38"/>
            <path class="edge" d="M36.600 0 33 15.900 22.800 28.600 8.100 35.700H-8.100L-22.800 28.600-33 15.900-36.600 0-33-15.900-22.800-28.600-8.100-35.700H8.100L22.800-28.600 33-15.900z"/>
          </g>
        </g>
        <text x="11" y="798" class="sheetname">"A3_1"</text>
      </svg>
      <div class="floatbar">
        <button aria-label="重合"><svg viewBox="0 0 24 24"><path d="M.5 23.500 23.500.500M12 7v10M7 12h10" class="k"/></svg></button>
        <button aria-label="共线"><svg viewBox="0 0 24 24"><path d="m.5 23.500 9-9M14.500 9.500l9-9" class="k"/></svg></button>
        <button aria-label="水平"><svg viewBox="0 0 24 24"><path d="M0 11.500h24" class="k"/></svg></button>
        <button aria-label="竖直"><svg viewBox="0 0 24 24"><path d="M11.500 0v24" class="k"/></svg></button>
        <button aria-label="相切"><svg viewBox="0 0 24 24"><circle cx="15.500" cy="15.500" r="8" class="k"/><path d="M.5 18.500 18.500.500" class="k"/></svg></button>
        <button aria-label="平行"><svg viewBox="0 0 24 24"><path d="m.5 16 15-15.500M8.500 23.500l15-15.500" class="k"/></svg></button>
        <button aria-label="垂直"><svg viewBox="0 0 24 24"><path d="m.5 7 16 16.500M9 15.500 23.500.500" class="k"/></svg></button>
        <button aria-label="等长"><svg viewBox="0 0 24 24"><path d="M1 8.500h22M1 15.500h22" class="k"/></svg></button>
        <button aria-label="对称"><svg viewBox="0 0 24 24"><path d="M.7 2.500h6v7h10v-7h6v19H.7z" class="k"/><path d="M11.500 1v22" class="or" stroke-dasharray="4 2"/></svg></button>
        <button aria-label="点在曲线上"><svg viewBox="0 0 24 24"><path d="M3.500 0v24M3.500 11.500h3M8 11.500h2M12 11.500h2M16 11.500h8" class="k"/><circle cx="3.500" cy="11.500" r="2.500" fill="#f07d00"/></svg></button>
        <i class="fsep"></i>
        <button class="drop" aria-label="关系选项"><i class="caret"></i></button>
      </div>
    </div>
  </section>
</main>

<footer class="status"><span>选择对象并使用 MB3，或双击，或按住并拖动来移动视图、尺寸或注释</span><output>草图未评估</output></footer>

<div class="ime">
  <svg class="sogou" viewBox="0 0 30 30"><path d="M1 5 25 1l4 3-1 21-5 4H5z" fill="#f4511e"/><path d="M23 8C15 4 7 7 8 11c1 4 14 3 14 7 0 5-10 5-17 1" fill="none" stroke="#fff" stroke-width="4"/></svg>
  <b>中</b>
  <svg viewBox="0 0 18 18"><circle cx="5" cy="6" r="2"/><path d="M12 9c4 0 3 5-1 7l1.500-4z"/></svg>
  <svg viewBox="0 0 18 18"><path d="M6 4c0-4 6-4 6 0v5c0 4-6 4-6 0z"/><path d="M3.500 8c0 8 11 8 11 0M9 14v3" fill="none" stroke="#1272d6" stroke-width="1.600"/></svg>
  <svg viewBox="0 0 18 18"><path d="M2 3h14v12H2z" /><path d="M4 6.500h10M4 9.500h10M5 12.500h8" stroke="#fff" stroke-width="1.400" stroke-dasharray="2 1.500"/></svg>
  <svg viewBox="0 0 18 18"><path d="m2 5 4-2 3 2 3-2 4 2v4l-3 1v6H5v-6L2 9z" fill="#a66be8"/><path d="m2 5 4-2 2 4-4 3z" fill="#f46a6a"/></svg>
  <svg viewBox="0 0 18 18"><path d="M4 4c3-2 7-2 10 0 3 3 4 10 2 11-2 0-3-3-4-3H6c-1 0-2 3-4 3-2-1-1-8 2-11z"/><path d="M4.500 8h4M6.500 6v4M12 7v2M13.500 8.500v2" stroke="#fff"/></svg>
  <svg viewBox="0 0 18 18"><rect x="1.500" y="2" width="7" height="7" rx="1.500"/><rect x="10" y="2" width="6.500" height="7" rx="3"/><rect x="1.500" y="10.500" width="7" height="6.500" rx="1.500"/><rect x="10" y="10.500" width="6.500" height="6.500" rx="1.500"/></svg>
</div>
<div class="watermark">CSDN @山涧果子</div>
</div>
</body>
</html>
```
FILE: styles.css
```
* { box-sizing: border-box; }
body {
  margin: 0;
  font: 12px/16px "Noto Sans", "Noto Sans CJK SC", sans-serif;
  color: #1a1a1a;
  background: #fff;
}
button { margin: 0; padding: 0; border: 0; background: none; font: inherit; color: inherit; }
svg { display: block; flex: none; }
i { display: block; font-style: normal; flex: none; }
h1, h2 { margin: 0; font: inherit; }
.defs { position: absolute; width: 0; height: 0; }
.app { position: relative; display: flex; flex-direction: column; height: 100vh; overflow: hidden; }

.caret { border: 3px solid transparent; border-top-color: currentColor; border-bottom: 0; width: 6px; height: 3px; }
.k { fill: none; stroke: #444; stroke-width: 1.3; }
.lens { fill: #fff; }
.cy { fill: none; stroke: #06a9d0; stroke-width: 1.3; }
.or { fill: none; stroke: #ef7d10; stroke-width: 1.3; }
.c { fill: none; stroke: #06a9d0; stroke-width: 1.3; }

/* header */
.header { flex: none; height: 56px; color: #fff; background: linear-gradient(90deg, #00648a, #057ba7); }
.header svg { fill: none; stroke: #fff; }
.titlebar { display: flex; align-items: center; height: 26px; }
.nx { width: 42px; padding-left: 4px; font-size: 20px; line-height: 26px; font-weight: 800; }
.quick { display: flex; align-items: center; gap: 6px; font-size: 11px; }
.vsep { width: 1px; height: 18px; background: #004f6e; }
.qb { width: 17px; }
.qb svg, .qwin svg { width: 16px; height: 16px; }
.off svg { stroke: #2b8aa9; }
.drop { display: flex; align-items: center; justify-content: center; width: 8px; height: 16px; }
.qwin { display: flex; align-items: center; gap: 5px; }
.qwin span { margin-right: 1px; }
.overflow { flex-direction: column; gap: 2px; }
.overflow::before { content: ""; width: 7px; height: 1px; background: #fff; }
.apptitle { flex: 1; text-align: center; font-size: 12px; }
.siemens { font-size: 13px; font-weight: 900; line-height: 16px; padding-top: 2px; width: 88px; }
.winctl { display: flex; gap: 12px; padding-right: 7px; }
.winctl svg { width: 12px; height: 12px; }

.menubar { display: flex; align-items: center; height: 30px; }
.tabs { flex: 1; display: flex; justify-content: space-between; font-size: 13px; line-height: 26px; padding: 0 7px 0 8px; white-space: nowrap; }
.tabs a { color: #fff; text-decoration: none; padding: 0 11px 0 12px; height: 26px; }
.tabs .file { margin-right: 14px; }
.tabs .active { color: #fdc64c; box-shadow: inset 0 -2px #fdc64c; }
.search { display: flex; align-items: center; width: 178px; height: 22px; border: 1px solid #777; background: #fff; }
.search input { flex: 1; min-width: 0; border: 0; padding: 0; outline: 0; font: 11px/20px "Noto Sans", "Noto Sans CJK SC", sans-serif; }
.search input::placeholder { color: #aaa; }
.search svg { width: 18px; height: 18px; stroke: #444; margin-right: 1px; }
.menutools { display: flex; align-items: center; gap: 10px; padding: 0 14px 0 10px; font-size: 11px; }
.menutools svg { width: 16px; height: 16px; }
.tutor { display: flex; align-items: center; gap: 4px; }
.menutools .bang { margin-left: 4px; }
.menutools .bang svg { width: 4px; }

/* ribbon */
.ribbon { flex: none; display: flex; height: 94px; padding-top: 5px; border-bottom: 1px solid #dcdcdc; font-size: 11px; line-height: 14px; }
.group { position: relative; display: flex; flex-direction: column; }
.group::after { content: ""; position: absolute; right: 0; top: 0; width: 1px; height: 84px; background: #d8d8d8; }
.tools { flex: 1; display: flex; align-items: flex-start; white-space: nowrap; }
.g-sketch .tools { padding: 0 3px 0 10px; }
.g-edit .tools { padding: 0 3px 0 8px; }
.g-solve .tools { padding: 0 8px; }
.big { display: flex; flex-direction: column; align-items: center; gap: 5px; width: 41px; }
.big svg { width: 32px; height: 32px; overflow: visible; }
.wide { width: 50px; }
.fit { width: auto; padding: 0 4px; }
.g-edit .big { width: 40px; }
.g-edit .gapped { margin-left: 8px; }
.dim { font: 9px "Noto Sans", sans-serif; fill: #ef7d10; }
.pair, .triple { display: flex; flex-direction: column; }
.pair { gap: 11px; padding-top: 4px; width: 70px; margin-left: 6px; }
.triple { gap: 7px; width: 51px; }
.pair button, .triple button { display: flex; align-items: center; gap: 4px; }
.pair svg { width: 24px; height: 24px; }
.triple svg { width: 16px; height: 16px; }
.foot { display: flex; height: 18px; color: #00648a; line-height: 18px; }
.foot span { flex: 1; text-align: center; }
.foot button { width: 20px; display: flex; align-items: center; justify-content: center; color: #1a1a1a; }
.more { margin-left: auto; align-self: flex-end; width: 18px; height: 18px; display: flex; align-items: center; justify-content: center; }

/* selection bar */
.selbar { flex: none; display: flex; align-items: center; height: 28px; padding-left: 13px; border-bottom: 1px solid #aaa; font-size: 11px; }
.selbar .menu { display: flex; align-items: center; gap: 7px; }
.selbar .menu svg { width: 10px; height: 10px; }
.bsep { width: 1px; height: 20px; background: #d8d8d8; margin: 0 12px 0 7px; }
.combo { position: relative; }
.combo select { appearance: none; width: 100%; height: 22px; border: 1px solid #6f6f6f; border-radius: 0; background: #fff; padding: 0 2px; font: inherit; color: #000; }
.combo::after { content: ""; position: absolute; right: 4px; top: 9px; border: 4px solid transparent; border-top-color: #000; border-bottom: 0; }
.c1 { width: 149px; }
.c2 { width: 156px; margin-right: 5px; }
.sb { display: flex; align-items: center; justify-content: center; width: 24px; height: 22px; }
.sb svg { width: 16px; height: 16px; }
.c1 + .sb { margin: 0 5px; }
.on { background: #cfe6eb; margin-right: 2px; }
.selbar .drop { margin: 0 4px 0 3px; }

/* work area */
.work { flex: 1; min-height: 0; display: flex; }
.rail { flex: none; display: flex; flex-direction: column; width: 37px; background: #dcdcdc; border-right: 1px solid #a8a8a8; }
.rail button { display: flex; align-items: center; justify-content: center; height: 44px; padding-left: 3px; }
.rail svg { width: 24px; height: 24px; }
.rail .gear { height: 32px; padding: 0; }
.rail .gear svg { width: 18px; height: 18px; }
.rail .current { background: #fff; border: 1px solid #a8a8a8; border-right: 0; margin: 0 -1px 0 3px; padding: 0; }

.panel { flex: none; display: flex; flex-direction: column; width: 323px; padding: 0 9px 6px 8px; border-right: 1px solid #a8a8a8; }
.phead { flex: none; display: flex; align-items: center; gap: 4px; height: 27px; margin-left: -2px; padding-bottom: 2px; font-weight: 500; }
.phead svg { width: 16px; height: 16px; }
.phead button { width: 12px; height: 11px; border: 1px solid #000; border-top-width: 2px; margin: 0 2px 0 auto; }
.treebox { flex: 1; min-height: 0; display: flex; flex-direction: column; border: 1px solid #d4d4d4; }
.treescroll { flex: 1; min-height: 0; overflow: hidden; }
.tree { width: 100%; table-layout: fixed; border-collapse: separate; border-spacing: 0; }
.w39 { width: 39px; }
.w24 { width: 24px; }
.w45 { width: 44px; }
.tree th { height: 21px; padding: 0 0 0 6px; background: #efefef; border-right: 1px solid #d4d4d4; border-bottom: 1px solid #d4d4d4; font-weight: 400; text-align: left; white-space: nowrap; line-height: 19px; }
.tree td { height: 20px; padding: 0; border-right: 1px solid #e6e6e6; border-bottom: 1px solid #e6e6e6; overflow: hidden; }
.tree tr > :last-child { border-right: 0; }
.tree tbody tr:nth-child(even) { background: #fafafa; }
.sort { display: inline-block; border: 5px solid transparent; border-bottom-color: #000; border-top: 0; margin: 0 0 2px 17px; }
.node { display: flex; align-items: center; height: 19px; white-space: nowrap; }
.node span { padding-left: 3px; }
.slot { width: 19px; height: 20px; flex: none; }
.ic { width: 16px; height: 16px; }
.tree td > .ic { margin: 0 auto; }
.tree td.left > .ic { margin-left: 6px; }
.dim-row .node { color: #a0a0a0; }
.bold-row .node { font-weight: 700; }
.hscroll { flex: none; height: 17px; background: #efefef; padding: 7px 61px 0 17px; }
.hscroll i { height: 2px; background: #868686; }
.splitter { flex: none; height: 6px; margin: 2px 0; background: #dcdcdc; border: 1px solid #a8a8a8; }
.folds { flex: none; display: flex; flex-direction: column; }
.folds button { display: flex; align-items: center; gap: 9px; height: 24px; padding: 2px 0 0 10px; border-bottom: 2px solid #d0d0d0; color: #00648a; font-size: 14px; }
.folds button::before { content: ""; border: 4px solid transparent; border-left: 5px solid #00648a; border-right: 0; }

.doc { flex: 1; min-width: 0; display: flex; flex-direction: column; }
.doctabs { flex: none; display: flex; height: 27px; border-bottom: 2px solid #005f87; }
.doctab { display: flex; align-items: center; gap: 6px; height: 25px; padding: 0 7px; background: #005f87; color: #fff; font-size: 12px; }
.doctab svg { width: 14px; height: 14px; }
.doctab .sm, .doctab button svg { width: 10px; height: 10px; }
.canvas { position: relative; flex: 1; min-height: 0; overflow: hidden; background: #ccc; border-left: 1px solid #ddd; margin-bottom: 1px; }
.drawing { position: absolute; inset: 0 0 0 -1px; width: calc(100% + 1px); height: 100%; }
.edge { fill: none; stroke: #000; stroke-width: 1.7; }
.blue { fill: none; stroke: #00f; stroke-width: 1.7; stroke-linejoin: round; }
.ctr { fill: none; stroke: #777; stroke-width: 1; }
.ctr2 { fill: none; stroke: #999; stroke-width: 2; }
.sheet { stroke: #000; stroke-dasharray: 8 8; }
.sheetname { font: 13px "Liberation Sans", sans-serif; }
.floatbar { position: absolute; top: 5px; left: 50%; transform: translateX(-50%); display: flex; align-items: center; height: 33px; padding: 0 6px 0 5px; background: #fff; }
.floatbar button { width: 33px; display: flex; justify-content: center; }
.floatbar svg { width: 24px; height: 24px; }
.floatbar .drop { width: 13px; align-items: flex-end; }
.fsep { width: 1px; height: 26px; background: #d8d8d8; }

/* status bar */
.status { flex: none; display: grid; grid-template-columns: 1fr auto 1fr; align-items: center; height: 24px; padding: 0 3px 4px; border-top: 1px solid #a8a8a8; font-size: 11px; font-weight: 700; background: linear-gradient(#fff 21px, #9fc3c5 21px, #9fc3c5 22px, #dff0f0 22px) no-repeat; white-space: nowrap; }

/* input-method bar and credit lie over the lower right corner */
.ime { position: absolute; right: 0; bottom: 16px; display: flex; align-items: center; gap: 6px; height: 26px; padding-right: 3px; border: 1px solid #b8cbe8; background: #fff; color: #1272d6; font-size: 15px; }
.ime svg { width: 18px; height: 18px; fill: #1272d6; }
.ime .sogou { width: 30px; height: 30px; margin-left: -26px; }
.watermark { position: absolute; right: 6px; bottom: 12px; font: 36px/44px "Liberation Sans", "Noto Sans CJK SC", sans-serif; font-weight: 300; color: rgba(225, 225, 225, .75); text-shadow: 1px 1px 1px rgba(110, 110, 110, .7); white-space: nowrap; }
```
